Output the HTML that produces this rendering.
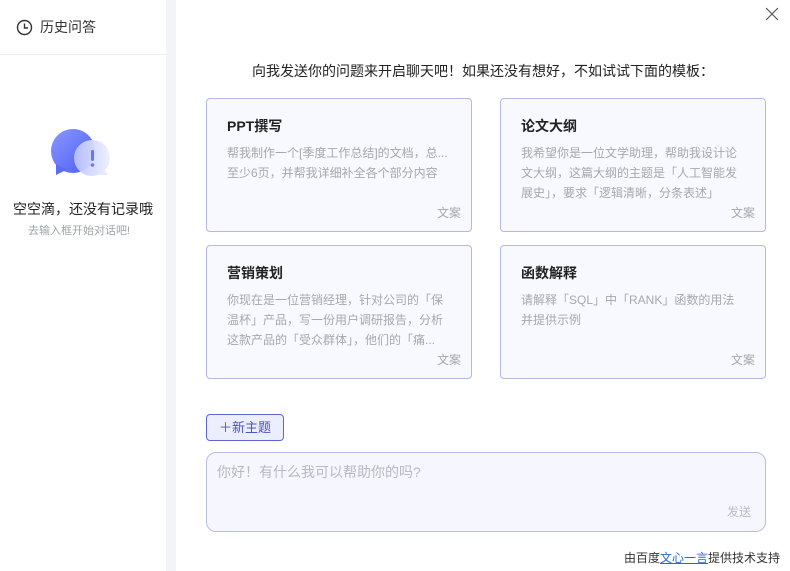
<!DOCTYPE html>
<html><head><meta charset="utf-8"><style>
*{margin:0;padding:0;box-sizing:border-box}
body{width:790px;height:571px;overflow:hidden;background:#fff;font-family:"Liberation Sans","Noto Sans CJK SC",sans-serif;position:relative}
.side{position:absolute;left:0;top:0;width:166px;height:571px;background:#fff}
.gap{position:absolute;left:166px;top:0;width:10px;height:571px;background:#f3f4f8}
.hd{height:55px;border-bottom:1px solid #eceef2;display:flex;align-items:center;padding-left:16px;font-size:14px;color:#333}
.card{position:absolute;width:266px;height:134px;background:#f8f9fe;border:1px solid #b4b8e2;border-radius:4px;padding:0 20px}
.card h3{font-size:14px;font-weight:bold;color:#222;margin-top:18px;line-height:18px}
.card p{font-size:12px;color:#a6a8ad;line-height:20px;margin-top:8px}
.card span{position:absolute;right:10px;bottom:10px;font-size:12px;color:#a6a8ad}
.abs{position:absolute}
</style></head><body>
<div class="side">
<div class="hd"><svg width="17" height="17" viewBox="0 0 17 17" style="margin-right:7px"><circle cx="8.5" cy="8.5" r="7" fill="none" stroke="#333" stroke-width="1.4"/><path d="M8.5 4.5V9H12" fill="none" stroke="#333" stroke-width="1.4"/></svg>历史问答</div>
<svg class="abs" style="left:50px;top:128px" width="62" height="50" viewBox="0 0 62 50"><defs><linearGradient id="g" x1="0" y1="0" x2="1" y2="1"><stop offset="0" stop-color="#8a97ff"/><stop offset="1" stop-color="#4a5cf5"/></linearGradient><linearGradient id="h" x1="0" y1="0" x2="1" y2="0"><stop offset="0" stop-color="#bcc4ff" stop-opacity=".9"/><stop offset="1" stop-color="#eef0ff"/></linearGradient></defs><circle cx="23" cy="23" r="22" fill="url(#g)"/><path d="M6 36 L6 47 L16 42Z" fill="#5a6bf7"/><circle cx="42" cy="30" r="18" fill="url(#h)"/><path d="M54 42 L58 47 L46 47Z" fill="#e6e9ff"/><rect x="41" y="22" width="3" height="11" rx="1.5" fill="#6b78f0"/><circle cx="42.5" cy="37" r="1.8" fill="#6b78f0"/></svg>
<div class="abs" style="left:0;width:166px;top:199px;text-align:center;font-size:14px;color:#222">空空滴，还没有记录哦</div>
<div class="abs" style="left:0;width:158px;top:222px;text-align:center;font-size:11px;color:#a0a3a8">去输入框开始对话吧!</div>
</div>
<div class="gap"></div>
<svg class="abs" style="left:765px;top:7px" width="14" height="14"><path d="M1 1L13 13M13 1L1 13" stroke="#555" stroke-width="1.2"/></svg>
<div class="abs" style="left:176px;width:614px;top:61px;text-align:center;font-size:14px;color:#222">向我发送你的问题来开启聊天吧！如果还没有想好，不如试试下面的模板：</div>
<div class="card" style="left:206px;top:98px"><h3>PPT撰写</h3><p>帮我制作一个[季度工作总结]的文档，总...<br>至少6页，并帮我详细补全各个部分内容</p><span>文案</span></div>
<div class="card" style="left:500px;top:98px"><h3>论文大纲</h3><p>我希望你是一位文学助理，帮助我设计论文大纲，这篇大纲的主题是「人工智能发展史」，要求「逻辑清晰，分条表述」</p><span>文案</span></div>
<div class="card" style="left:206px;top:245px"><h3>营销策划</h3><p>你现在是一位营销经理，针对公司的「保温杯」产品，写一份用户调研报告，分析这款产品的「受众群体」，他们的「痛...</p><span>文案</span></div>
<div class="card" style="left:500px;top:245px"><h3>函数解释</h3><p>请解释「SQL」中「RANK」函数的用法并提供示例</p><span>文案</span></div>
<div class="abs" style="left:206px;top:414px;width:78px;height:27px;border:1px solid #5d66d0;border-radius:4px;background:#eceefe;color:#4c55c4;font-size:13px;line-height:25px;text-align:center">＋新主题</div>
<div class="abs" style="left:206px;top:452px;width:560px;height:80px;border:1px solid #b8bde8;border-radius:10px;background:#f5f6fe"><div style="position:absolute;left:10px;top:9px;font-size:14px;color:#b8b9be">你好！有什么我可以帮助你的吗?</div><div style="position:absolute;right:14px;bottom:11px;font-size:12px;color:#bcbdc2">发送</div></div>
<div class="abs" style="right:10px;top:549px;font-size:12px;color:#333">由百度<span style="color:#2a66d9;text-decoration:underline">文心一言</span>提供技术支持</div>
</body></html>
